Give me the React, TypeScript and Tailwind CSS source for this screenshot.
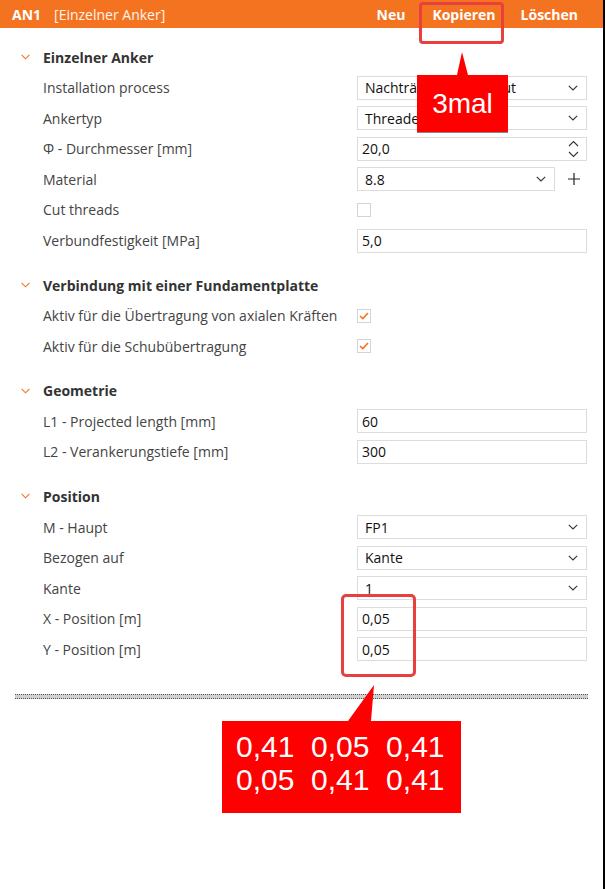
import React from "react";

const font = { fontFamily: '"Open Sans", "Noto Sans", sans-serif' };

function Chevron({ className = "" }: { className?: string }) {
  return (
    <svg width="10" height="6" viewBox="0 0 10 6" className={className}>
      <path d="M0.8 0.8 L5 5 L9.2 0.8" fill="none" stroke="currentColor" strokeWidth="1.1" />
    </svg>
  );
}

function SectionHeader({ title }: { title: string }) {
  return (
    <div className="flex h-[24px] items-center">
      <div className="flex w-[43px] justify-start pl-[21px] text-[#f47321]">
        <svg width="9" height="6" viewBox="0 0 9 6">
          <path d="M0.6 0.8 L4.5 4.8 L8.4 0.8" fill="none" stroke="currentColor" strokeWidth="1.1" />
        </svg>
      </div>
      <span className="text-[14px] font-bold text-[#333]">{title}</span>
    </div>
  );
}

function Row({ label, children }: { label: string; children: React.ReactNode }) {
  return (
    <div className="flex h-[24px] items-center">
      <div className="w-[357px] pl-[43px] text-[14px] text-[#444] whitespace-nowrap">{label}</div>
      <div className="flex flex-1 items-center">{children}</div>
    </div>
  );
}

function Select({ value, narrow }: { value: string; narrow?: boolean }) {
  return (
    <div
      className={`flex h-[24px] items-center justify-between border border-[#dcdcdc] bg-white pl-[7px] pr-[8px] text-[14px] text-[#111] ${
        narrow ? "w-[198px]" : "w-[230px]"
      }`}
    >
      <span className="whitespace-nowrap">{value}</span>
      <Chevron className="text-[#333]" />
    </div>
  );
}

function Input({ value, spinner }: { value: string; spinner?: boolean }) {
  return (
    <div className="flex h-[24px] w-[230px] items-center justify-between border border-[#dcdcdc] bg-white pl-[4px] pr-[7px] text-[14px] text-[#111]">
      <span>{value}</span>
      {spinner && (
        <svg width="11" height="18" viewBox="0 0 11 18" className="text-[#333]">
          <path d="M1 6 L5.5 1.5 L10 6" fill="none" stroke="currentColor" strokeWidth="1.1" />
          <path d="M1 12 L5.5 16.5 L10 12" fill="none" stroke="currentColor" strokeWidth="1.1" />
        </svg>
      )}
    </div>
  );
}

function Checkbox({ checked }: { checked?: boolean }) {
  return (
    <div className="flex h-[14px] w-[14px] items-center justify-center border border-[#d4d4d4] bg-white">
      {checked && (
        <svg width="10" height="8" viewBox="0 0 10 8">
          <path d="M1 4 L3.8 6.6 L9 1" fill="none" stroke="#f47321" strokeWidth="1.6" />
        </svg>
      )}
    </div>
  );
}

export default function App() {
  return (
    <div className="relative h-[889px] w-[605px] overflow-hidden bg-white" style={font}>
      <div className="flex h-full w-[605px] flex-col border-r-[2px] border-black">
        {/* Header */}
        <div className="flex h-[28px] shrink-0 items-center bg-[#f47321] text-[14px] text-white">
          <span className="pl-[12px] font-bold">AN1</span>
          <span className="pl-[13px] text-[#fff3ea]">[Einzelner Anker]</span>
          <div className="flex-1" />
          <span className="font-bold">Neu</span>
          <span className="pl-[27px] font-bold">Kopieren</span>
          <span className="pl-[25px] pr-[25px] font-bold">Löschen</span>
        </div>

        <div className="flex flex-col gap-[20.5px] pt-[17px]">
          <div className="flex flex-col gap-[6.6px]">
            <SectionHeader title="Einzelner Anker" />
            <Row label="Installation process">
              <Select value="Nachträglich eingebaut" />
            </Row>
            <Row label="Ankertyp">
              <Select value="Threaded rod" />
            </Row>
            <Row label="Φ - Durchmesser [mm]">
              <Input value="20,0" spinner />
            </Row>
            <Row label="Material">
              <Select value="8.8" narrow />
              <svg width="14" height="14" viewBox="0 0 14 14" className="ml-[12px] text-[#222]">
                <path d="M7 1 V13 M1 7 H13" stroke="currentColor" strokeWidth="1.2" />
              </svg>
            </Row>
            <Row label="Cut threads">
              <Checkbox />
            </Row>
            <Row label="Verbundfestigkeit [MPa]">
              <Input value="5,0" />
            </Row>
          </div>

          <div className="flex flex-col gap-[6.6px]">
            <SectionHeader title="Verbindung mit einer Fundamentplatte" />
            <Row label="Aktiv für die Übertragung von axialen Kräften">
              <Checkbox checked />
            </Row>
            <Row label="Aktiv für die Schubübertragung">
              <Checkbox checked />
            </Row>
          </div>

          <div className="flex flex-col gap-[6.6px]">
            <SectionHeader title="Geometrie" />
            <Row label="L1 - Projected length [mm]">
              <Input value="60" />
            </Row>
            <Row label="L2 - Verankerungstiefe [mm]">
              <Input value="300" />
            </Row>
          </div>

          <div className="flex flex-col gap-[6.6px]">
            <SectionHeader title="Position" />
            <Row label="M - Haupt">
              <Select value="FP1" />
            </Row>
            <Row label="Bezogen auf">
              <Select value="Kante" />
            </Row>
            <Row label="Kante">
              <Select value="1" />
            </Row>
            <Row label="X - Position [m]">
              <Input value="0,05" />
            </Row>
            <Row label="Y - Position [m]">
              <Input value="0,05" />
            </Row>
          </div>
        </div>

        {/* dotted divider */}
        <div className="ml-[15px] mt-[33px] h-[5px] w-[573px] border-y border-dotted border-[#555] bg-[#d0d0d0]" />
      </div>

      {/* Annotation 1 */}
      <div className="absolute left-[419px] top-[2px] h-[42px] w-[85px] rounded-[4px] border-[3px] border-[#e8403f]" />
      <svg className="absolute left-0 top-0" width="605" height="889" viewBox="0 0 605 889" style={{ pointerEvents: "none" }}>
        <polygon points="462,52 457,75 468,75" fill="#ff0000" />
        <polygon points="374,685 348,721 371,721" fill="#ff0000" />
      </svg>
      <div
        className="absolute left-[417px] top-[75px] flex h-[57px] w-[91px] items-center justify-center bg-[#ff0000] text-[28px] text-white shadow-[0_1px_0_#888]"
        style={{ fontFamily: '"Liberation Sans", Arial, sans-serif' }}
      >
        3mal
      </div>

      {/* Annotation 2 */}
      <div className="absolute left-[341px] top-[594px] h-[83px] w-[75px] rounded-[5px] border-[3px] border-[#e8403f]" />
      <div
        className="absolute left-[222px] top-[721px] h-[92px] w-[239px] pl-[14px] pt-[9px] text-[30px] leading-[33px] text-white whitespace-pre bg-[#ff0000]"
        style={{ fontFamily: '"Liberation Sans", Arial, sans-serif' }}
      >
        <div>0,41  0,05  0,41</div>
        <div>0,05  0,41  0,41</div>
      </div>
    </div>
  );
}
